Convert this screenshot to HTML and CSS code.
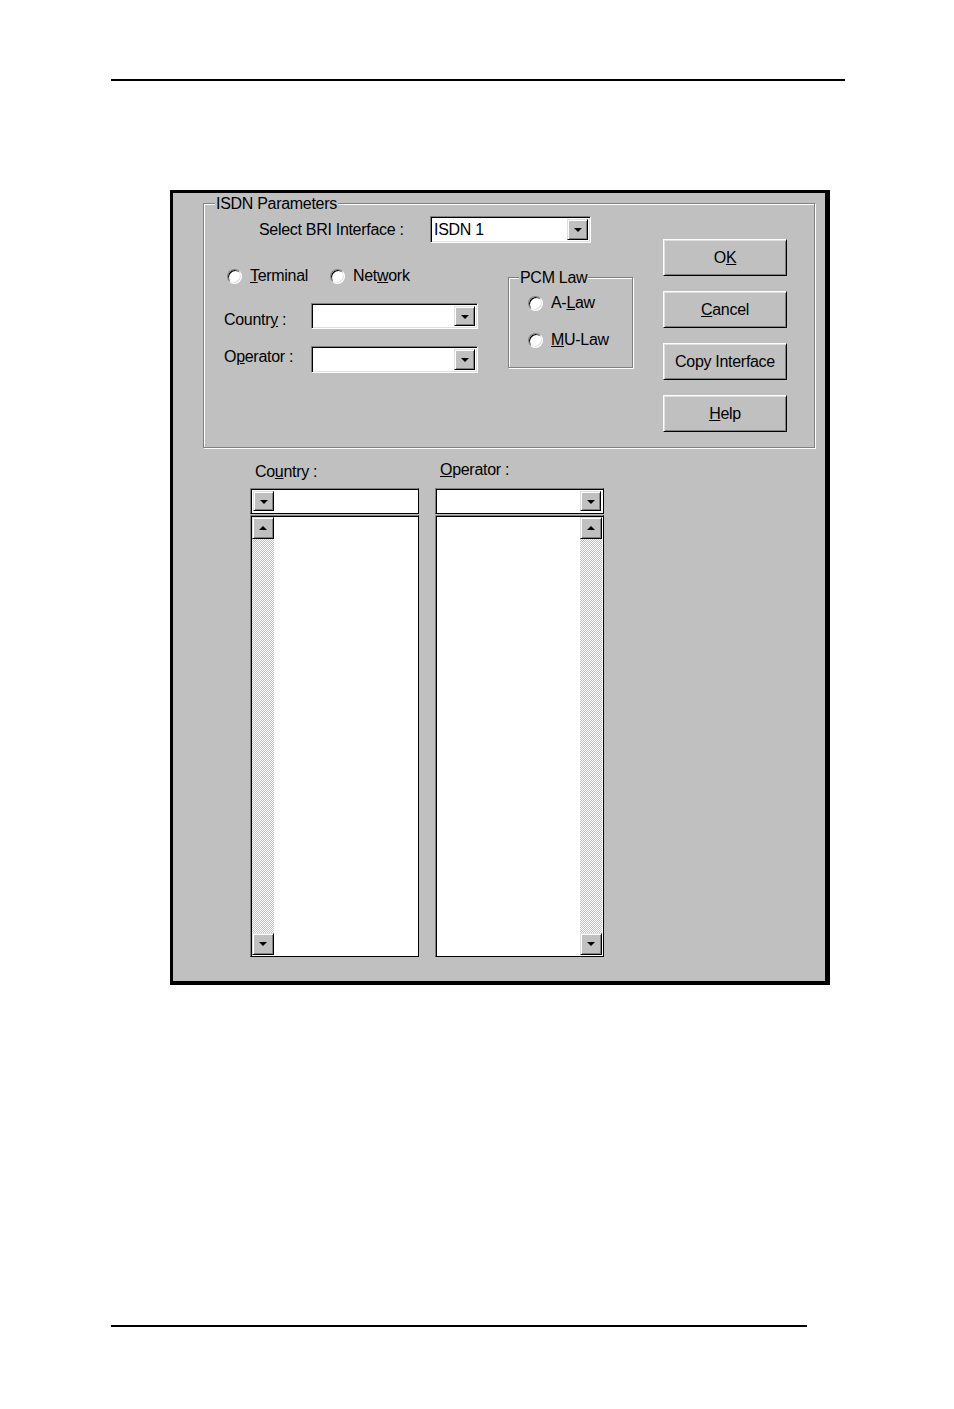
FILE: index.html
```html
<!DOCTYPE html>
<html>
<head>
<meta charset="utf-8">
<title>ISDN Parameters</title>
<link rel="stylesheet" href="styles.css">
</head>
<body>
<div class="page">
  <div class="rule rule-top"></div>
  <div class="dialog">
    <div class="group">
      <span class="legend">ISDN Parameters</span>
      <div class="group-body">
        <div class="left">
          <div class="row-bri">
            <span class="lbl-bri">Select BRI Interface :</span>
            <div class="combo combo-bri"><span class="combo-text">ISDN 1</span><span class="drop"></span></div>
          </div>
          <div class="row-main">
            <div class="col-fields">
              <div class="radios">
                <div class="radio radio-term"><span class="dot"></span><span><u>T</u>erminal</span></div>
                <div class="radio"><span class="dot"></span><span>Net<u>w</u>ork</span></div>
              </div>
              <div class="field field-country">
                <span class="flabel">Countr<u>y</u> :</span>
                <div class="combo combo-sm"><span class="combo-text"></span><span class="drop"></span></div>
              </div>
              <div class="field field-operator">
                <span class="flabel">O<u>p</u>erator :</span>
                <div class="combo combo-sm combo-tall"><span class="combo-text"></span><span class="drop"></span></div>
              </div>
            </div>
            <div class="pcm">
              <span class="legend pcm-legend">PCM Law</span>
              <div class="radio"><span class="dot"></span><span>A-<u>L</u>aw</span></div>
              <div class="radio radio-mu"><span class="dot"></span><span><u>M</u>U-Law</span></div>
            </div>
          </div>
        </div>
        <div class="buttons">
          <div class="btn">O<u>K</u></div>
          <div class="btn"><u>C</u>ancel</div>
          <div class="btn">Copy Interface</div>
          <div class="btn"><u>H</u>elp</div>
        </div>
      </div>
    </div>
    <div class="lists">
      <div class="listcol">
        <div class="llabel">Co<u>u</u>ntry :</div>
        <div class="combo combo-list"><span class="drop"></span><span class="combo-text"></span></div>
        <div class="listbox">
          <div class="scrollbar"><span class="sbtn up"></span><span class="track"></span><span class="sbtn down"></span></div>
          <div class="list-area"></div>
        </div>
      </div>
      <div class="listcol">
        <div class="llabel llabel-op"><u>O</u>perator :</div>
        <div class="combo combo-list"><span class="combo-text"></span><span class="drop"></span></div>
        <div class="listbox">
          <div class="list-area"></div>
          <div class="scrollbar"><span class="sbtn up"></span><span class="track"></span><span class="sbtn down"></span></div>
        </div>
      </div>
    </div>
  </div>
  <div class="rule rule-bottom"></div>
</div>
</body>
</html>
```

FILE: styles.css
```css
html, body {
  margin: 0;
  padding: 0;
  background: #ffffff;
}

.page {
  width: 954px;
  height: 1409px;
  overflow: hidden;
  font-family: "Liberation Sans", Arial, sans-serif;
  font-size: 16px;
  letter-spacing: -0.3px;
  color: #000;
  padding-top: 79px;
  box-sizing: border-box;
}

.rule {
  background: #000;
  height: 2px;
  margin-left: 111px;
}

.rule-top {
  width: 734px;
}

.rule-bottom {
  width: 696px;
  margin-top: 340px;
}

/* dialog */
.dialog {
  margin-top: 109px;
  margin-left: 170px;
  width: 660px;
  height: 795px;
  box-sizing: border-box;
  background: #c0c0c0;
  border-style: solid;
  border-color: #000;
  border-width: 3px 5px 4px 3px;
  padding-top: 10px;
  padding-left: 30px;
}

.group {
  position: relative;
  width: 612px;
  height: 245px;
  box-sizing: border-box;
  border: 1px solid #808080;
  box-shadow: 1px 1px 0 #fff, inset 1px 1px 0 #fff;
}

.legend {
  position: absolute;
  top: -9px;
  left: 11px;
  padding: 0 1px;
  line-height: 18px;
  background: #c0c0c0;
}

.group-body {
  display: flex;
}

.left {
  display: flex;
  flex-direction: column;
}

.row-bri {
  display: flex;
  align-items: center;
  margin-top: 12px;
  padding-left: 55px;
  height: 27px;
}

.lbl-bri {
  width: 171px;
}

/* combo boxes */
.combo {
  display: flex;
  align-items: stretch;
  box-sizing: border-box;
  background: #fff;
  border: 1px solid;
  border-color: #808080 #fff #fff #808080;
  box-shadow: inset 1px 1px 0 #000, inset -1px -1px 0 #dfdfdf;
  padding: 2px;
}

.combo-text {
  flex: 1;
  line-height: 21px;
  padding-left: 1px;
}

.combo-bri {
  width: 161px;
  height: 27px;
}

.drop {
  width: 21px;
  box-sizing: border-box;
  background: #c0c0c0;
  border: 1px solid;
  border-color: #dfdfdf #000 #000 #dfdfdf;
  box-shadow: inset 1px 1px 0 #fff, inset -1px -1px 0 #808080;
  display: flex;
  align-items: center;
  justify-content: center;
}

.drop::before {
  content: "";
  width: 0;
  height: 0;
  border-left: 4px solid transparent;
  border-right: 4px solid transparent;
  border-top: 4px solid #000;
  margin-top: 1px;
}

.row-main {
  display: flex;
}

.col-fields {
  width: 304px;
  display: flex;
  flex-direction: column;
}

.radios {
  display: flex;
  margin-top: 23px;
  padding-left: 23px;
  height: 20px;
}

.radio {
  display: flex;
  align-items: center;
  height: 20px;
}

.radio-term {
  width: 103px;
}

.dot {
  width: 15px;
  height: 15px;
  box-sizing: border-box;
  border-radius: 50%;
  background: #fff;
  border: 1px solid;
  border-color: #808080 #fff #fff #808080;
  box-shadow: inset 1px 1px 0 #000, inset -1px -1px 0 #dfdfdf;
  margin-right: 8px;
}

.field {
  display: flex;
  align-items: center;
  padding-left: 20px;
  margin-top: 17px;
}

.flabel {
  width: 87px;
}

.field-country .flabel {
  padding-top: 8px;
}

.field-operator .flabel {
  padding-bottom: 6px;
}

.combo-sm {
  width: 167px;
  height: 26px;
}

.combo-tall {
  height: 27px;
}

.pcm {
  position: relative;
  width: 125px;
  height: 91px;
  box-sizing: border-box;
  margin-top: 34px;
  border: 1px solid #808080;
  box-shadow: 1px 1px 0 #fff, inset 1px 1px 0 #fff;
  padding-top: 15px;
  padding-left: 19px;
}

.pcm-legend {
  left: 10px;
}

.radio-mu {
  margin-top: 17px;
}

/* buttons */
.buttons {
  display: flex;
  flex-direction: column;
  gap: 15px;
  margin-top: 35px;
  margin-left: 30px;
}

.btn {
  width: 124px;
  height: 37px;
  box-sizing: border-box;
  display: flex;
  align-items: center;
  justify-content: center;
  background: #c0c0c0;
  border: 1px solid;
  border-color: #fff #000 #000 #fff;
  box-shadow: inset 1px 1px 0 #dfdfdf, inset -1px -1px 0 #808080;
}

/* lower lists */
.lists {
  display: flex;
  gap: 16px;
  margin-top: 14px;
  margin-left: 47px;
}

.listcol {
  width: 169px;
  display: flex;
  flex-direction: column;
}

.llabel {
  height: 20px;
  line-height: 20px;
  padding-left: 5px;
}

.llabel-op {
  margin-top: -2px;
  margin-bottom: 2px;
}

.combo-list {
  width: 169px;
  height: 26px;
  margin-top: 6px;
  border-color: #808080 #000 #000 #808080;
  box-shadow: inset 1px 1px 0 #000;
}

.listbox {
  margin-top: 1px;
  width: 169px;
  height: 442px;
  box-sizing: border-box;
  display: flex;
  background: #fff;
  border: 1px solid;
  border-color: #808080 #000 #000 #808080;
  box-shadow: inset 1px 1px 0 #000;
  padding: 1px;
}

.list-area {
  flex: 1;
}

.scrollbar {
  width: 22px;
  display: flex;
  flex-direction: column;
}

.track {
  flex: 1;
  background: repeating-conic-gradient(#fff 0 25%, #c0c0c0 0 50%) 0 0 / 2px 2px;
}

.sbtn {
  height: 22px;
  box-sizing: border-box;
  background: #c0c0c0;
  border: 1px solid;
  border-color: #dfdfdf #000 #000 #dfdfdf;
  box-shadow: inset 1px 1px 0 #fff, inset -1px -1px 0 #808080;
  display: flex;
  align-items: center;
  justify-content: center;
}

.sbtn::before {
  content: "";
  width: 0;
  height: 0;
  border-left: 4px solid transparent;
  border-right: 4px solid transparent;
}

.sbtn.up::before {
  border-bottom: 4px solid #000;
}

.sbtn.down::before {
  border-top: 4px solid #000;
}
```
